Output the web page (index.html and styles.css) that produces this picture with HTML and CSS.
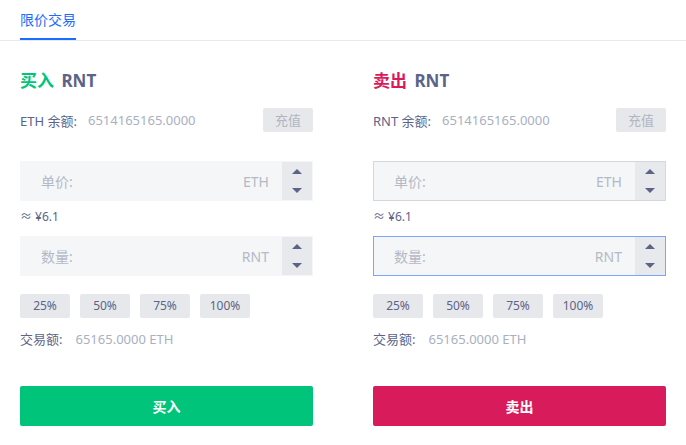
FILE: index.html
```html
<!DOCTYPE html>
<html lang="zh-CN">
<head>
<meta charset="utf-8">
<link rel="stylesheet" href="styles.css">
</head>
<body>
<div class="tabs">
  <div class="tab active">限价交易</div>
</div>
<div class="panels">
  <div class="panel">
    <div class="title"><span class="buy">买入</span> RNT</div>
    <div class="balance">
      <span class="label">ETH 余额:</span><span class="value">6514165165.0000</span>
      <span class="recharge">充值</span>
    </div>
    <div class="field">
      <span class="ph">单价:</span><span class="unit">ETH</span>
      <div class="spin"><span class="up"></span><span class="down"></span></div>
    </div>
    <div class="approx">≈ ¥6.1</div>
    <div class="field">
      <span class="ph">数量:</span><span class="unit">RNT</span>
      <div class="spin"><span class="up"></span><span class="down"></span></div>
    </div>
    <div class="pcts"><span>25%</span><span>50%</span><span>75%</span><span>100%</span></div>
    <div class="total"><span class="label">交易额:</span><span class="value">65165.0000 ETH</span></div>
    <button class="action buy-btn">买入</button>
  </div>
  <div class="panel">
    <div class="title"><span class="sell">卖出</span> RNT</div>
    <div class="balance">
      <span class="label">RNT 余额:</span><span class="value">6514165165.0000</span>
      <span class="recharge">充值</span>
    </div>
    <div class="field bordered">
      <span class="ph">单价:</span><span class="unit">ETH</span>
      <div class="spin"><span class="up"></span><span class="down"></span></div>
    </div>
    <div class="approx">≈ ¥6.1</div>
    <div class="field focused">
      <span class="ph">数量:</span><span class="unit">RNT</span>
      <div class="spin"><span class="up"></span><span class="down"></span></div>
    </div>
    <div class="pcts"><span>25%</span><span>50%</span><span>75%</span><span>100%</span></div>
    <div class="total"><span class="label">交易额:</span><span class="value">65165.0000 ETH</span></div>
    <button class="action sell-btn">卖出</button>
  </div>
</div>
</body>
</html>
```

FILE: styles.css
```css
* { box-sizing: border-box; }
body {
  margin: 0;
  font-family: "Noto Sans", "Noto Sans CJK SC", sans-serif;
  color: #5b6488;
  background: #fff;
}
.tabs {
  height: 41px;
  border-bottom: 1px solid #e8e9ec;
  padding-left: 20px;
  display: flex;
}
.tab {
  font-size: 14px;
  color: #1a6dff;
  line-height: 38px;
  height: 40px;
  border-bottom: 2px solid #1a6dff;
  padding-top: 1px;
}
.panels {
  display: grid;
  grid-template-columns: 293px 293px;
  column-gap: 60px;
  padding: 0 20px;
}
.panel { display: flex; flex-direction: column; }
.title {
  margin-top: 29px;
  font-size: 17px;
  font-weight: 700;
  line-height: 22px;
  color: #5b6488;
}
.buy, .sell { margin-right: 3px; }
.buy { color: #00c47a; }
.sell { color: #d81b5a; }
.balance {
  margin-top: 16px;
  display: flex;
  align-items: center;
  height: 24px;
  font-size: 13px;
}
.label { color: #5b6488; margin-right: 11px; }
.value { color: #a9b0c2; }
.recharge {
  margin-left: auto;
  width: 50px;
  height: 24px;
  line-height: 24px;
  text-align: center;
  background: #e6e8eb;
  color: #b0b5c2;
  border-radius: 2px;
  font-size: 13px;
}
.field {
  margin-top: 29px;
  height: 40px;
  background: #f5f6f8;
  display: flex;
  align-items: center;
  font-size: 14px;
  color: #b4b9c6;
  padding-left: 20px;
  border: 1px solid transparent;
}
.field + .approx + .field { margin-top: 0; }
.bordered { border-color: #d3d7de; }
.focused { border-color: #7ca6f7; }
.ph { flex: 1; }
.unit { margin-right: 13px; }
.spin {
  width: 30px;
  align-self: stretch;
  background: #e8e9ec;
  display: flex;
  flex-direction: column;
  align-items: center;
  justify-content: space-between;
  padding: 7px 0 7px;
}
.up, .down { width: 0; height: 0; border-left: 5px solid transparent; border-right: 5px solid transparent; }
.up { border-bottom: 5px solid #5b6488; }
.down { border-top: 5px solid #5b6488; }
.approx {
  font-size: 12px;
  line-height: 16px;
  margin: 8px 0 11px;
  color: #5b6488;
}
.pcts {
  margin-top: 18px;
  display: flex;
  gap: 10px;
}
.pcts span {
  width: 50px;
  height: 24px;
  line-height: 24px;
  text-align: center;
  font-size: 12px;
  background: #e6e8eb;
  border-radius: 2px;
  color: #5b6488;
}
.total {
  margin-top: 12px;
  font-size: 13px;
  line-height: 18px;
}
.total .label { margin-right: 13px; }
.action {
  margin-top: 38px;
  height: 40px;
  border: 0;
  border-radius: 2px;
  color: #fff;
  font-family: inherit;
  font-size: 14px;
  font-weight: 700;
}
.buy-btn { background: #00c47a; }
.sell-btn { background: #d81b5a; }
```
